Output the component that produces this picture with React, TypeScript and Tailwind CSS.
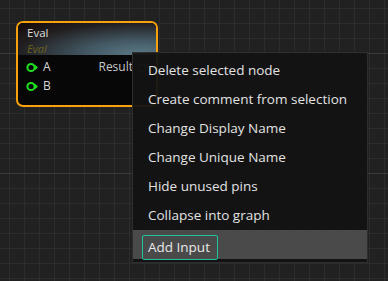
import React from 'react'

const menuItems = [
  'Delete selected node',
  'Create comment from selection',
  'Change Display Name',
  'Change Unique Name',
  'Hide unused pins',
  'Collapse into graph',
]

function GridBg() {
  const minorX: number[] = []
  const minorY: number[] = []
  for (let x = 9; x < 388; x += 15) minorX.push(x)
  for (let y = 8; y < 281; y += 15) minorY.push(y)
  return (
    <svg className="absolute inset-0" width={388} height={281}>
      {minorX.map((x) => (
        <rect key={'x' + x} x={x} y={0} width={1} height={281} fill={(x - 85) % 120 === 0 ? '#3b3b3b' : '#2c2c2c'} />
      ))}
      {minorY.map((y) => (
        <rect key={'y' + y} x={0} y={y} width={388} height={1} fill={(y - 53) % 120 === 0 ? '#3b3b3b' : '#2c2c2c'} />
      ))}
    </svg>
  )
}

function Pin({ dim }: { dim?: boolean }) {
  const c = dim ? '#1b5a22' : '#1fe01f'
  return (
    <svg width={13} height={11} viewBox="0 0 13 11">
      <circle cx={5} cy={5.5} r={3.6} fill="none" stroke={c} strokeWidth={2} />
      <path d="M9 2.8 L12 5.5 L9 8.2 Z" fill={c} />
    </svg>
  )
}

export default function App() {
  return (
    <div className="relative w-[388px] h-[281px] overflow-hidden bg-[#212121] font-['Open_Sans',sans-serif]">
      <GridBg />

      {/* node */}
      <div className="absolute left-[16px] top-[21px] w-[142px] h-[86px] rounded-[7px] border-2 border-[#f7a20c] bg-[#070707] overflow-hidden">
        <div className="h-[32px] pl-[9px] pt-[3px] bg-[radial-gradient(ellipse_at_88%_95%,#5a7884_0%,#435964_30%,#221f21_70%,#170808_100%)]">
          <div className="text-[11.5px] leading-[13px] text-[#dedede]">Eval</div>
          <div className="mt-[3px] text-[11px] leading-[13px] italic text-[#6b611c]">Eval</div>
        </div>
        <div className="flex flex-col gap-[7px] pt-[6px] pl-[8px] pr-[6px]">
          <div className="flex items-center h-[12px]">
            <Pin />
            <span className="ml-[4px] text-[12px] text-[#d6d6d6]">A</span>
            <span className="ml-auto text-[12px] text-[#c8c8c8]">Result</span>
            <span className="ml-[4px]"><Pin dim /></span>
          </div>
          <div className="flex items-center h-[12px]">
            <Pin />
            <span className="ml-[4px] text-[12px] text-[#d6d6d6]">B</span>
          </div>
        </div>
      </div>

      {/* context menu */}
      <div className="absolute left-[132px] top-[52px] w-[236px] h-[211px] bg-[#131313]/95 border border-[#2e2e2e] py-[3px]">
        {menuItems.map((m) => (
          <div key={m} className="h-[29px] flex items-center pl-[15px] text-[13.5px] text-[#e2e2e2]">
            {m}
          </div>
        ))}
        <div className="h-[29px] bg-[#4a4a4a] pt-[4px] pl-[9px]">
          <div className="inline-flex items-center h-[25px] pl-[5px] pr-[7px] rounded-[2px] border border-[#20c29b] text-[13.5px] text-[#e8e8e8]">
            Add Input
          </div>
        </div>
      </div>
    </div>
  )
}
